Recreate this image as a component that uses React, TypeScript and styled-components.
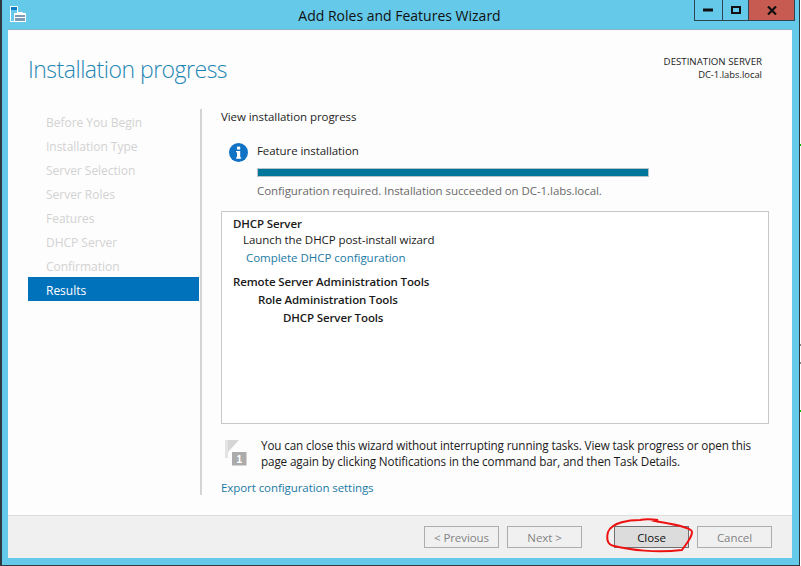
import React from "react";
import styled, { createGlobalStyle } from "styled-components";

const Global = createGlobalStyle`
  html, body { margin: 0; padding: 0; background: #fff; }
  body { font-family: "Open Sans", "Noto Sans", "Liberation Sans", sans-serif; font-size: 11.5px; letter-spacing: -0.07px; color: #1e1e1e; }
`;

const Page = styled.div`
  position: relative;
  width: 801px;
  height: 566px;
  overflow: hidden;
  background: #fff;
`;

const Frame = styled.div`
  box-sizing: border-box;
  width: 800px;
  height: 566px;
  background: #65c9ea;
  border: solid #2f3a40;
  border-width: 0 1px 1px 2px;
  display: flex;
  flex-direction: column;
`;

const TitleBar = styled.div`
  position: relative;
  height: 30px;
  flex: none;
  display: flex;
  align-items: center;
  justify-content: center;
  font-size: 14px;
  letter-spacing: 0;
  color: #111;
  padding-right: 2px;
`;

const AppIcon = styled.svg`
  position: absolute;
  left: 8px;
  top: 5px;
`;

const Controls = styled.div`
  position: absolute;
  top: 0;
  right: 4px;
  display: flex;
  height: 20px;
  border: 1px solid #2d4654;
  border-top: none;
`;

const Control = styled.div<{ $w: number; $close?: boolean }>`
  width: ${(p) => p.$w}px;
  display: flex;
  align-items: center;
  justify-content: center;
  background: ${(p) => (p.$close ? "#c75b52" : "transparent")};
  & + & { border-left: 1px solid #2d4654; }
`;

const Client = styled.div`
  flex: 1;
  margin: 0 7px 7px 6px;
  background: #fdfdfd;
  box-shadow: 0 -1px 0 #86b4c8;
  display: flex;
  flex-direction: column;
  min-height: 0;
`;

const Header = styled.div`
  flex: none;
  height: 79px;
  box-sizing: border-box;
  padding: 25px 30px 0 20px;
  display: flex;
  justify-content: space-between;
  align-items: flex-start;
`;

const Title = styled.h1`
  margin: 0;
  font-size: 23px;
  line-height: 28px;
  font-weight: 300;
  color: #1e86b3;
  letter-spacing: -0.5px;
`;

const Destination = styled.div`
  font-size: 9.7px;
  line-height: 13px;
  letter-spacing: 0;
  text-align: right;
  color: #222;
`;

const ServerName = styled.div`
  font-size: 9.4px;
`;

const Body = styled.div`
  flex: 1;
  min-height: 0;
  display: flex;
`;

const Sidebar = styled.ul`
  list-style: none;
  margin: 0 0 20px 20px;
  padding: 0;
  width: 172px;
  box-sizing: content-box;
  border-right: 2px solid #d4d4d4;
`;

const Step = styled.li<{ $active?: boolean }>`
  height: 24px;
  line-height: 24px;
  padding: 2px 0 0 18px;
  width: 171px;
  box-sizing: border-box;
  font-size: 12px;
  letter-spacing: -0.02px;
  color: ${(p) => (p.$active ? "#fff" : "#d2d2d2")};
  background: ${(p) => (p.$active ? "#0072bc" : "transparent")};
`;

const Content = styled.div`
  flex: 1;
  padding: 2px 23px 0 19px;
  display: flex;
  flex-direction: column;
  min-width: 0;
`;

const Lead = styled.div`
  height: 14px;
  line-height: 12px;
  margin-bottom: 18px;
`;

const Status = styled.div`
  display: flex;
  gap: 9px;
  padding-left: 8px;
`;

const StatusBody = styled.div`
  width: 392px;
`;

const StatusTitle = styled.div`
  line-height: 16px;
  height: 18px;
`;

const Progress = styled.div`
  height: 9px;
  margin-top: 7px;
  background: #00769a;
  border: 1px solid #b8c4c8;
  box-sizing: border-box;
`;

const StatusNote = styled.div`
  margin-top: 7px;
  height: 16px;
  line-height: 14px;
  color: #6a6a6a;
  white-space: nowrap;
`;

const ResultBox = styled.div`
  margin-top: 11px;
  height: 213px;
  box-sizing: border-box;
  border: 1px solid #c8c8c8;
  background: #fff;
  padding: 5px 11px;
  color: #111;
`;

const Row = styled.div<{ $indent?: number; $bold?: boolean; $link?: boolean; $gap?: number; $h?: number }>`
  height: ${(p) => p.$h ?? 18}px;
  line-height: ${(p) => (p.$h ?? 18) - 2}px;
  padding-left: ${(p) => p.$indent ?? 0}px;
  margin-top: ${(p) => p.$gap ?? 0}px;
  font-weight: ${(p) => (p.$bold ? 600 : 400)};
  letter-spacing: ${(p) => (p.$bold ? -0.12 : p.$link ? -0.03 : -0.07)}px;
  color: ${(p) => (p.$link ? "#1b7aa5" : "#1a1a1a")};
`;

const Notice = styled.div`
  display: flex;
  gap: 13px;
  margin-top: 13px;
  padding-left: 3px;
`;

const NoticeText = styled.div`
  font-size: 11.7px;
  line-height: 16px;
  letter-spacing: -0.13px;
  color: #1a1a1a;
  white-space: pre;
`;

const ExportLink = styled.div`
  margin-top: 12px;
  height: 16px;
  line-height: 14px;
  color: #1b7aa5;
`;

const Footer = styled.div`
  flex: none;
  height: 43px;
  box-sizing: border-box;
  background: #f0f0f0;
  border-top: 1px solid #dcdcdc;
  display: flex;
  align-items: center;
  padding: 0 20px 0 0;
  justify-content: flex-end;
`;

const Button = styled.div<{ $primary?: boolean; $disabled?: boolean; $gapLeft?: number }>`
  width: 75px;
  height: 22px;
  box-sizing: border-box;
  margin-left: ${(p) => p.$gapLeft ?? 0}px;
  display: flex;
  align-items: center;
  justify-content: center;
  border: 1px solid ${(p) => (p.$primary ? "#707070" : "#adadad")};
  background: ${(p) => (p.$primary ? "#dcdcdc" : "#f0f0f0")};
  color: ${(p) => (p.$disabled ? "#838383" : "#111")};
`;

const Scribble = styled.svg`
  position: absolute;
  left: 600px;
  top: 512px;
  pointer-events: none;
`;

const Tick = styled.div<{ $y: number; $c: string }>`
  position: absolute;
  left: 800px;
  top: ${(p) => p.$y}px;
  width: 1px;
  height: 2px;
  background: ${(p) => p.$c};
`;

const steps = [
  "Before You Begin",
  "Installation Type",
  "Server Selection",
  "Server Roles",
  "Features",
  "DHCP Server",
  "Confirmation",
  "Results",
];

export default function App() {
  return (
    <Page>
      <Global />
      <Frame>
        <TitleBar>
          <AppIcon width="18" height="18" viewBox="0 0 18 18">
            <rect x="0.5" y="1.5" width="7" height="15" fill="none" stroke="#fff" />
            <rect x="1" y="2" width="6" height="3" fill="#0f7cc4" />
            <rect x="4" y="8" width="12" height="9" fill="#fff" />
            <rect x="5" y="10" width="10" height="6" fill="#7b9cb3" />
            <path d="M7.5 9.5V7.5h5v2" fill="none" stroke="#fff" strokeWidth="1" />
            <path d="M5 12.5h10" stroke="#fff" strokeWidth="1" />
          </AppIcon>
          Add Roles and Features Wizard
          <Controls>
            <Control $w={27}>
              <svg width="11" height="4" viewBox="0 0 11 4">
                <rect width="10" height="3" y="0.5" fill="#111" />
              </svg>
            </Control>
            <Control $w={25}>
              <svg width="10" height="8" viewBox="0 0 10 8">
                <rect x="1" y="1" width="8" height="6" fill="none" stroke="#111" strokeWidth="2" />
              </svg>
            </Control>
            <Control $w={45} $close>
              <svg width="10" height="9" viewBox="0 0 10 9">
                <path d="M1 0.5L9 8.5M9 0.5L1 8.5" stroke="#111" strokeWidth="2.2" />
              </svg>
            </Control>
          </Controls>
        </TitleBar>
        <Client>
          <Header>
            <Title>Installation progress</Title>
            <Destination>
              DESTINATION SERVER
              <ServerName>DC-1.labs.local</ServerName>
            </Destination>
          </Header>
          <Body>
            <Sidebar>
              {steps.map((s) => (
                <Step key={s} $active={s === "Results"}>
                  {s}
                </Step>
              ))}
            </Sidebar>
            <Content>
              <Lead>View installation progress</Lead>
              <Status>
                <svg width="19" height="19" viewBox="0 0 19 19">
                  <circle cx="9.5" cy="9.5" r="9.5" fill="#0f72c4" />
                  <rect x="8" y="8" width="3.2" height="7.5" fill="#fff" />
                  <rect x="7" y="8" width="3" height="1.3" fill="#fff" />
                  <rect x="7" y="14.3" width="5.2" height="1.3" fill="#fff" />
                  <rect x="8" y="3.6" width="3.2" height="3" fill="#fff" />
                </svg>
                <StatusBody>
                  <StatusTitle>Feature installation</StatusTitle>
                  <Progress />
                  <StatusNote>Configuration required. Installation succeeded on DC-1.labs.local.</StatusNote>
                </StatusBody>
              </Status>
              <ResultBox>
                <Row $bold $h={15}>DHCP Server</Row>
                <Row $indent={10}>Launch the DHCP post-install wizard</Row>
                <Row $indent={13} $link>Complete DHCP configuration</Row>
                <Row $bold $gap={6}>Remote Server Administration Tools</Row>
                <Row $bold $indent={25}>Role Administration Tools</Row>
                <Row $bold $indent={50}>DHCP Server Tools</Row>
              </ResultBox>
              <Notice>
                <svg width="24" height="30" viewBox="0 0 24 30" style={{ flex: "none" }}>
                  <rect x="1" y="3" width="3" height="18" fill="#e4e4e4" />
                  <path d="M4 3H15L4 15z" fill="#d6d6d6" />
                  <rect x="8" y="15" width="14.5" height="13.5" fill="#ababab" />
                  <text x="15.2" y="25.5" fontSize="10" fontWeight="700" fill="#fff" textAnchor="middle" fontFamily="Liberation Sans, sans-serif">1</text>
                </svg>
                <NoticeText>
                  {"You can close this wizard without interrupting running tasks. View task progress or open this\npage again by clicking Notifications in the command bar, and then Task Details."}
                </NoticeText>
              </Notice>
              <ExportLink>Export configuration settings</ExportLink>
            </Content>
          </Body>
          <Footer>
            <Button $disabled>&lt; Previous</Button>
            <Button $disabled $gapLeft={8}>Next &gt;</Button>
            <Button $primary $gapLeft={32}>Close</Button>
            <Button $disabled $gapLeft={8}>Cancel</Button>
          </Footer>
        </Client>
      </Frame>
      <Scribble width="100" height="44" viewBox="0 0 100 44">
        <path
          d="M40 8C30 8 12 10 8 20C6 28 8 33 14 34C30 38 56 41 82 38C86 32 92 26 92 20C92 15 70 12 55 9L58 8C50 7 45 7 40 8Z"
          fill="none"
          stroke="#ee1111"
          strokeWidth="2"
        />
      </Scribble>
      <Tick $y={144} $c="#00c000" />
      <Tick $y={344} $c="#888" />
      <Tick $y={362} $c="#888" />
      <Tick $y={410} $c="#00c000" />
    </Page>
  );
}
